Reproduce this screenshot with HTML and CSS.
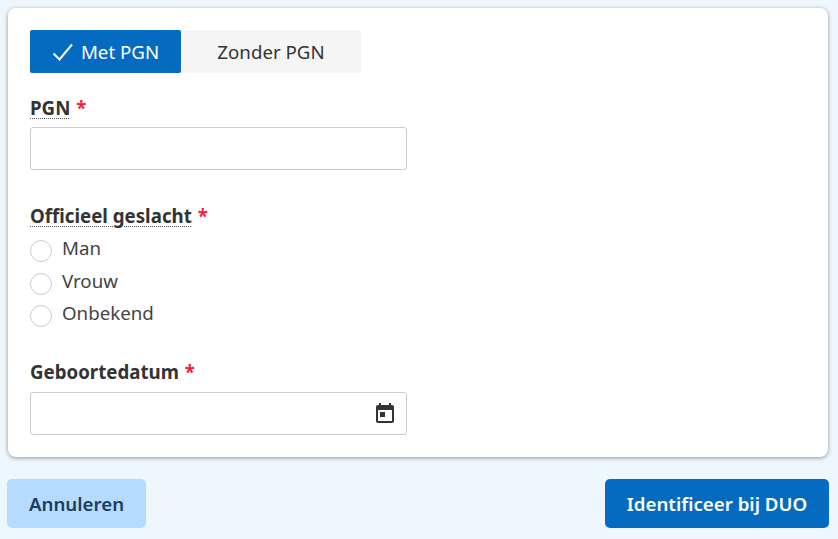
FILE: index.html
```html
<!DOCTYPE html>
<html lang="nl">
<head>
    <meta charset="UTF-8">
    <meta name="viewport" content="width=device-width, initial-scale=1.0">
    <title>Identificeer bij DUO</title>
    <link rel="stylesheet" href="styles.css">
</head>
<body>
    <div class="card">
        <div class="toggle">
            <div class="toggle-item active">
                <svg class="check" width="22" height="18" viewBox="0 0 22 18"><path d="M1.5 10.5 L7.5 16.5 L20 1.5" fill="none" stroke="#fff" stroke-width="2"/></svg>
                Met PGN
            </div>
            <div class="toggle-item">Zonder PGN</div>
        </div>

        <div class="label label-pgn"><span class="hint">PGN</span> <span class="req">*</span></div>
        <div class="input"></div>

        <div class="label label-sex"><span class="hint">Officieel geslacht</span> <span class="req">*</span></div>
        <div class="radio-row"><span class="radio"></span>Man</div>
        <div class="radio-row"><span class="radio"></span>Vrouw</div>
        <div class="radio-row"><span class="radio"></span>Onbekend</div>

        <div class="label label-date">Geboortedatum <span class="req">*</span></div>
        <div class="input input-date">
            <svg width="24" height="24" viewBox="0 0 24 24"><path fill="#333" d="M19 4h-1V2h-2v2H8V2H6v2H5c-1.1 0-2 .9-2 2v14c0 1.1.9 2 2 2h14c1.1 0 2-.9 2-2V6c0-1.1-.9-2-2-2zm0 16H5V9h14v11z"/><rect fill="#333" x="7" y="11" width="5" height="5"/></svg>
        </div>
    </div>

    <div class="actions">
        <button class="btn btn-cancel">Annuleren</button>
        <button class="btn btn-primary">Identificeer bij DUO</button>
    </div>
</body>
</html>
```

FILE: styles.css
```css
body {
    margin: 0;
    background: #eef6fe;
    font-family: 'Noto Sans', 'Open Sans', sans-serif;
    color: #333;
    font-size: 18.7px;
    height: 539px;
    overflow: hidden;
}

.card {
    box-sizing: border-box;
    width: 820px;
    height: 449px;
    margin: 8px 0 0 8px;
    padding: 22px;
    background: #fff;
    border-radius: 8px;
    box-shadow: 0 1px 4px rgba(0, 0, 0, 0.4);
}

.toggle {
    display: flex;
    width: 331px;
    height: 43px;
    background: #f5f5f5;
    border-radius: 2px;
}

.toggle-item {
    display: flex;
    align-items: center;
    justify-content: center;
    flex: 1;
    gap: 7px;
}

.toggle-item.active {
    flex: none;
    width: 151px;
    box-sizing: border-box;
    background: #056bc0;
    color: #fff;
    border-radius: 2px;
}

.label {
    font-weight: 700;
    line-height: 24px;
    color: #333;
}

.label-pgn { margin-top: 23px; height: 31px; }
.label-sex { margin-top: 34px; height: 30px; }
.label-date { margin-top: 28px; height: 32px; }

.hint {
    text-decoration: underline dotted #555 1px;
    text-underline-offset: 3px;
}

.req {
    color: #f0233c;
    margin-left: 1px;
}

.input {
    box-sizing: border-box;
    width: 377px;
    height: 43px;
    border: 1.5px solid #ccc;
    border-radius: 3px;
    background: #fff;
    display: flex;
    align-items: center;
    justify-content: flex-end;
    padding-right: 9px;
}

.radio-row {
    display: flex;
    height: 32.5px;
    line-height: 28px;
    color: #444;
}

.radio {
    box-sizing: border-box;
    width: 22px;
    height: 22px;
    margin: 6px 10px 0 0;
    border: 1.5px solid #ccc;
    border-radius: 50%;
}

.actions {
    display: flex;
    justify-content: space-between;
    width: 822px;
    margin: 22px 0 0 7px;
}

.btn {
    height: 49px;
    border: none;
    border-radius: 5px;
    font-family: inherit;
    font-size: 18.7px;
    font-weight: 600;
}

.btn-cancel {
    width: 139px;
    background: #b5dcfe;
    color: #1c3d5e;
}

.btn-primary {
    width: 224px;
    background: #056bc0;
    color: #fff;
}
```
